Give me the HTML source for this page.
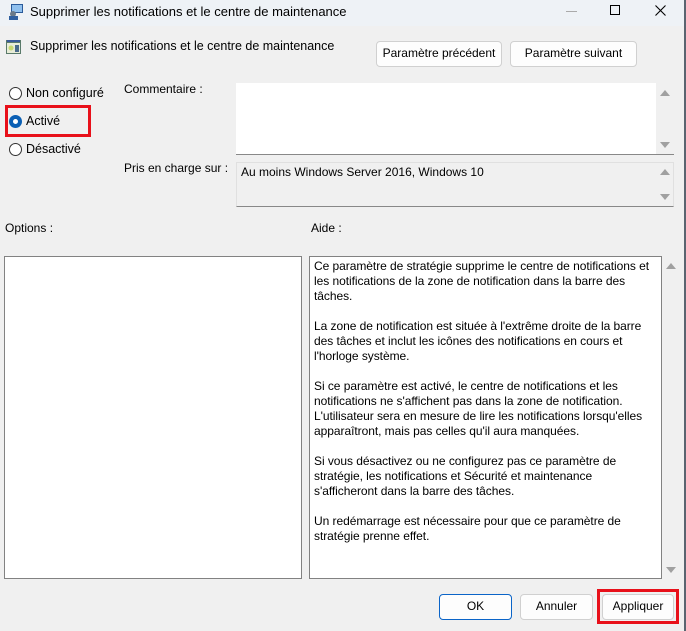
<!DOCTYPE html>
<html><head><meta charset="utf-8"><style>
*{margin:0;padding:0;box-sizing:border-box}
body{width:686px;height:631px;background:#f0f0f0;font-family:"Liberation Sans",sans-serif;font-size:12px;color:#000;position:relative;overflow:hidden}
.a{position:absolute;white-space:nowrap}
.btn{position:absolute;background:#fdfdfd;border:1px solid #d0d0d0;border-radius:4px;text-align:center;line-height:23px;font-size:12px}
.radio{position:absolute;width:13px;height:13px;border:1px solid #333;border-radius:50%;background:#fff}
.tri-up{position:absolute;width:0;height:0;border-left:5px solid transparent;border-right:5px solid transparent;border-bottom:6px solid #a0a0a0}
.tri-dn{position:absolute;width:0;height:0;border-left:5px solid transparent;border-right:5px solid transparent;border-top:6px solid #a0a0a0}
.help div{height:15px}
</style></head><body>
<div class="a" style="left:0;top:0;width:686px;height:26px;background:#eef2f6"></div>
<div class="a" style="left:684px;top:0;width:2px;height:631px;background:#5a6470"></div>
<svg class="a" style="left:7px;top:3px" width="18" height="18"><rect x="4" y="1" width="12" height="9" fill="#2a5a9a"/><rect x="5" y="2" width="10" height="7" fill="#8fc0ee"/><circle cx="6" cy="11" r="3" fill="#6a7a8a"/><rect x="2" y="13" width="9" height="4" fill="#3060a0"/></svg>
<div class="a" style="left:30px;top:4px;font-size:13px">Supprimer les notifications et le centre de maintenance</div>
<div class="a" style="left:566px;top:11px;width:11px;height:1px;background:#aaa"></div>
<div class="a" style="left:610px;top:5px;width:10px;height:10px;border:1px solid #000"></div>
<svg class="a" style="left:655px;top:5px" width="11" height="11"><path d="M0.5 0.5L10.5 10.5M10.5 0.5L0.5 10.5" stroke="#000" stroke-width="1.1"/></svg>

<svg class="a" style="left:6px;top:39px" width="16" height="16"><rect x="0" y="1" width="15" height="14" fill="#5a7a6a"/><rect x="1" y="4" width="13" height="10" fill="#e8ecd8"/><rect x="1" y="1" width="13" height="2" fill="#3a5a9a"/><circle cx="5" cy="9" r="2.5" fill="#c8d870"/><rect x="9" y="6" width="4" height="7" fill="#4a6a8a"/></svg>
<div class="a" style="left:30px;top:39px;font-size:12.5px">Supprimer les notifications et le centre de maintenance</div>
<div class="btn" style="left:376px;top:41px;width:126px;height:26px">Paramètre précédent</div>
<div class="btn" style="left:510px;top:41px;width:127px;height:26px">Paramètre suivant</div>

<div class="radio" style="left:9px;top:87px"></div>
<div class="a" style="left:26px;top:86px;font-size:12.5px">Non configuré</div>
<div class="a" style="left:5px;top:105px;width:86px;height:32px;border:3px solid #e8101a"></div>
<div class="radio" style="left:9px;top:115px;border:4px solid #0a5fb4;background:#fff"></div>
<div class="a" style="left:26px;top:114px;font-size:12.5px">Activé</div>
<div class="radio" style="left:9px;top:143px"></div>
<div class="a" style="left:26px;top:142px;font-size:12.5px">Désactivé</div>

<div class="a" style="left:124px;top:82px">Commentaire :</div>
<div class="a" style="left:236px;top:83px;width:438px;height:72px;background:#fff;border-bottom:1px solid #888"></div>
<div class="a" style="left:656px;top:83px;width:18px;height:71px;background:#f0f0f0"></div>
<div class="tri-up" style="left:660px;top:90px"></div>
<div class="tri-dn" style="left:660px;top:142px"></div>

<div class="a" style="left:124px;top:161px">Pris en charge sur :</div>
<div class="a" style="left:236px;top:162px;width:438px;height:45px;background:#f0f0f0;border:1px solid #e0e0e0;border-bottom:1px solid #888"></div>
<div class="a" style="left:241px;top:165px">Au moins Windows Server 2016, Windows 10</div>
<div class="tri-up" style="left:660px;top:169px"></div>
<div class="tri-dn" style="left:660px;top:194px"></div>

<div class="a" style="left:5px;top:221px">Options :</div>
<div class="a" style="left:311px;top:221px">Aide :</div>
<div class="a" style="left:4px;top:256px;width:298px;height:323px;background:#fff;border:1px solid #828282"></div>
<div class="a" style="left:309px;top:256px;width:353px;height:323px;background:#fff;border:1px solid #828282"></div>
<div class="tri-up" style="left:666px;top:263px"></div>
<div class="tri-dn" style="left:666px;top:567px"></div>
<div class="a help" style="left:314px;top:259px;line-height:15px;letter-spacing:-0.05px">
<div>Ce paramètre de stratégie supprime le centre de notifications et</div>
<div>les notifications de la zone de notification dans la barre des</div>
<div>tâches.</div><div></div>
<div>La zone de notification est située à l'extrême droite de la barre</div>
<div>des tâches et inclut les icônes des notifications en cours et</div>
<div>l'horloge système.</div><div></div>
<div>Si ce paramètre est activé, le centre de notifications et les</div>
<div>notifications ne s'affichent pas dans la zone de notification.</div>
<div>L'utilisateur sera en mesure de lire les notifications lorsqu'elles</div>
<div>apparaîtront, mais pas celles qu'il aura manquées.</div><div></div>
<div>Si vous désactivez ou ne configurez pas ce paramètre de</div>
<div>stratégie, les notifications et Sécurité et maintenance</div>
<div>s'afficheront dans la barre des tâches.</div><div></div>
<div>Un redémarrage est nécessaire pour que ce paramètre de</div>
<div>stratégie prenne effet.</div>
</div>

<div class="btn" style="left:439px;top:594px;width:73px;height:26px;border:1px solid #0a64c8">OK</div>
<div class="btn" style="left:520px;top:594px;width:73px;height:26px">Annuler</div>
<div class="a" style="left:597px;top:589px;width:82px;height:35px;border:3px solid #e8101a"></div>
<div class="btn" style="left:602px;top:594px;width:72px;height:26px">Appliquer</div>
</body></html>
